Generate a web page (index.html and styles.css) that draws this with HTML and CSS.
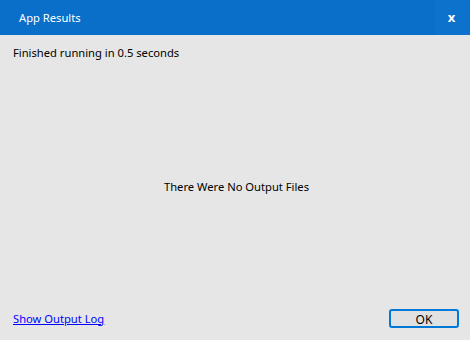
FILE: index.html
```html
<!DOCTYPE HTML>
<html>
<head>
	<title>App Results</title>
<link rel="stylesheet" href="styles.css">
</head>
<body>
<div class="dialog">
<div class="titlebar">
<span class="title">App Results</span>
<span class="close">x</span>
</div>
<div class="content">
<p class="status">Finished running in 0.5 seconds</p>
<div class="empty">There Were No Output Files</div>
<div class="footer">
<a href="#" class="loglink">Show Output Log</a>
<button class="ok">OK</button>
</div>
</div>
</div>
</body>
</html>
```

FILE: styles.css
```css
body{
	margin:0;
	font-family:"Noto Sans","Open Sans",sans-serif;
	font-size:11.2px;
	background:#e6e6e6;
}
.dialog{
	width:470px;
	height:340px;
	display:flex;
	flex-direction:column;
}
.titlebar{
	height:35px;
	background:#0a6fc8;
	color:#fff;
	display:flex;
	align-items:center;
	justify-content:space-between;
	flex:none;
}
.title{
	padding-left:19px;
}
.close{
	width:33px;
	height:35px;
	line-height:35px;
	text-align:center;
	font-weight:bold;
	font-size:13px;
	background:#0c72cc;
	padding-right:2px;
}
.content{
	flex:1;
	display:flex;
	flex-direction:column;
	padding:0 10px 0 13px;
}
.status{
	margin:10px 0 0;
	color:#000;
}
.empty{
	flex:1;
	display:flex;
	align-items:center;
	justify-content:center;
	padding-top:12px;
}
.footer{
	display:flex;
	justify-content:space-between;
	align-items:center;
	height:36px;
	padding-bottom:4px;
}
.loglink{
	color:#0000ff;
}
.ok{
	width:70px;
	height:19px;
	padding:0;
	font-family:inherit;
	font-size:12px;
	color:#000;
	background:#e1e1e1;
	border:2px solid #0078d7;
	border-radius:3px;
	margin-right:1px;
}
```
